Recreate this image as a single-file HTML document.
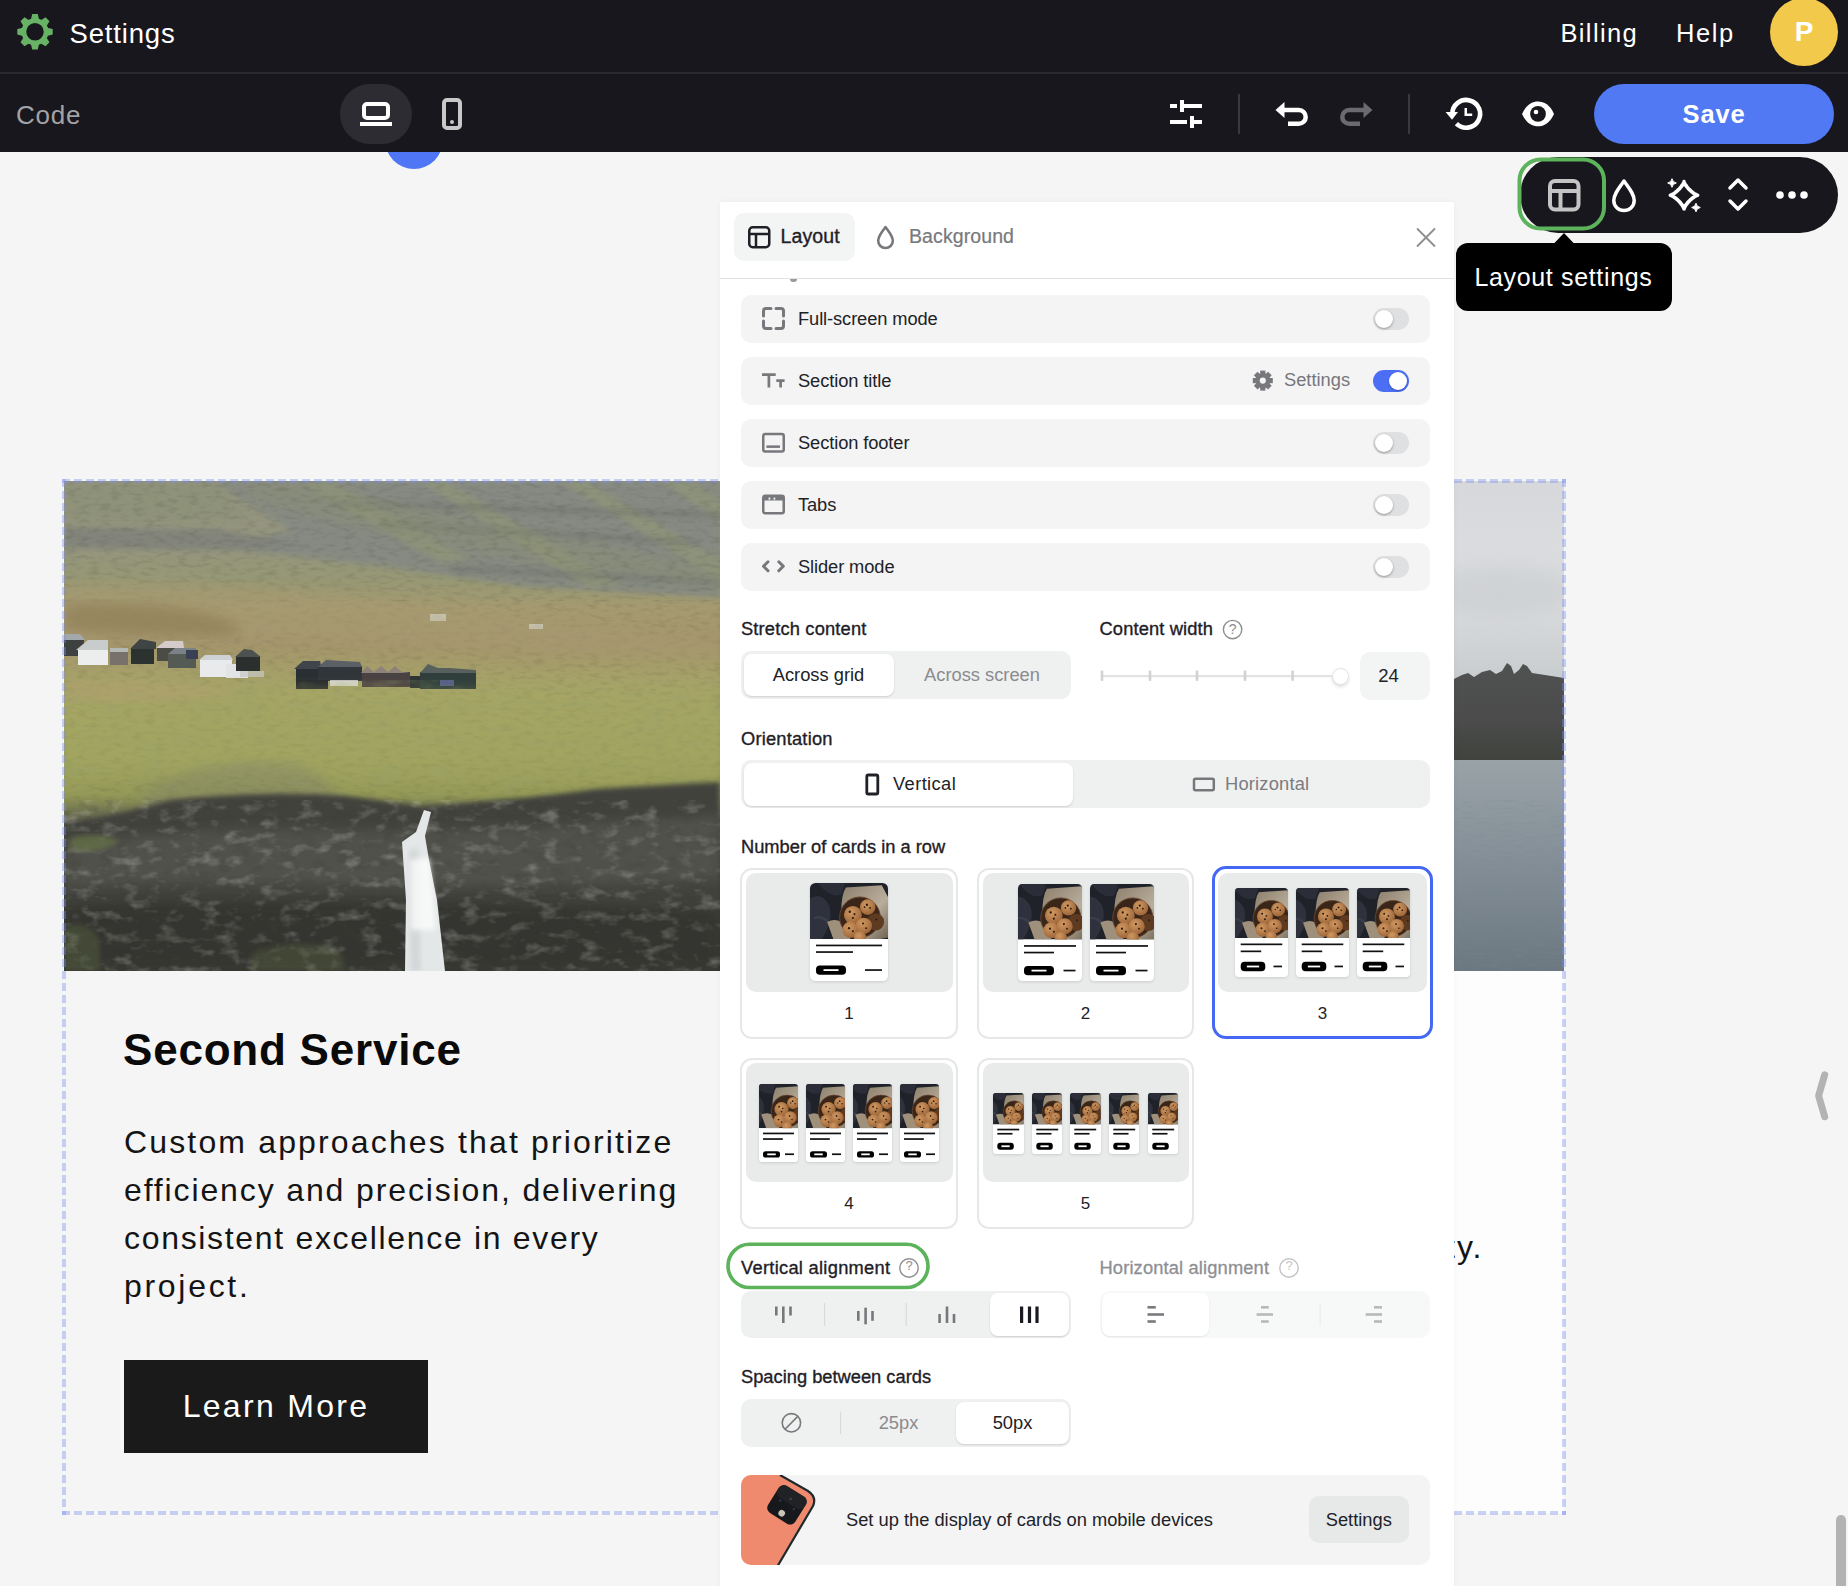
<!DOCTYPE html>
<html><head><meta charset="utf-8">
<style>
*{box-sizing:border-box;margin:0;padding:0}
html,body{width:1848px;height:1586px;overflow:hidden;background:#f5f5f5;font-family:"Liberation Sans",sans-serif;}
.a{position:absolute}
.t{position:absolute;white-space:nowrap;line-height:1}
svg{display:block}
</style></head><body>
<!-- CANVAS CONTENT -->
<div id="canvas">
<!-- left image -->
<svg class="a" style="left:64px;top:481px;filter:saturate(0.92)" width="656" height="490" viewBox="64 481 656 490">
<defs>
<linearGradient id="lg1" x1="0" y1="481" x2="0" y2="971" gradientUnits="userSpaceOnUse">
<stop offset="0" stop-color="#95957f"/>
<stop offset="0.14" stop-color="#94957b"/>
<stop offset="0.2" stop-color="#969872"/>
<stop offset="0.26" stop-color="#a69a6c"/>
<stop offset="0.33" stop-color="#a59568"/>
<stop offset="0.42" stop-color="#a7a463"/>
<stop offset="0.56" stop-color="#a0a55b"/>
<stop offset="0.64" stop-color="#949a52"/>
<stop offset="0.7" stop-color="#56574a"/>
<stop offset="0.8" stop-color="#45453f"/>
<stop offset="1" stop-color="#2e2e2b"/>
</linearGradient>
<filter id="bl2" x="-10%" y="-10%" width="120%" height="120%"><feGaussianBlur stdDeviation="2.5"/></filter>
<filter id="bl5" x="-10%" y="-10%" width="120%" height="120%"><feGaussianBlur stdDeviation="6"/></filter>
<filter id="noise" x="0" y="0" width="100%" height="100%"><feTurbulence type="fractalNoise" baseFrequency="0.09 0.25" numOctaves="2" seed="3"/><feColorMatrix values="0 0 0 0 0  0 0 0 0 0  0 0 0 0 0  0 0 0 1.6 -0.75"/></filter>
<filter id="noise2" x="0" y="0" width="100%" height="100%"><feTurbulence type="fractalNoise" baseFrequency="0.05 0.09" numOctaves="3" seed="7"/><feColorMatrix values="0 0 0 0 0.85  0 0 0 0 0.85  0 0 0 0 0.8  0 0 0 2.6 -1.35"/></filter>
<filter id="noise5" x="0" y="0" width="100%" height="100%"><feTurbulence type="fractalNoise" baseFrequency="0.03 0.08" numOctaves="3" seed="21"/><feColorMatrix values="0 0 0 0 0.3  0 0 0 0 0.35  0 0 0 0 0.15  0 0 0 2.2 -1.1"/></filter>
<filter id="noise4" x="0" y="0" width="100%" height="100%"><feTurbulence type="fractalNoise" baseFrequency="0.06 0.1" numOctaves="3" seed="11"/><feColorMatrix values="0 0 0 0 0.05  0 0 0 0 0.05  0 0 0 0 0.04  0 0 0 2.4 -1.2"/></filter>
</defs>
<rect x="64" y="481" width="656" height="490" fill="url(#lg1)"/>
<!-- gray cliff region upper right -->
<path d="M210 481 L720 481 L720 598 L620 592 L525 587 L380 566 L224 548 L290 530 Z" fill="#858982" opacity="0.85" filter="url(#bl2)"/>
<g fill="#939a72" opacity="0.55" filter="url(#bl2)">
<path d="M300 481 L330 481 L470 560 L440 562 Z"/>
<path d="M420 481 L445 481 L620 585 L590 588 Z"/>
<path d="M560 481 L585 481 L720 560 L720 580 Z"/>
<path d="M660 481 L690 481 L720 500 L720 520 Z"/>
</g>
<g fill="#6f736d" opacity="0.5" filter="url(#bl2)">
<path d="M380 520 L700 540 L700 546 L380 528 Z"/>
<path d="M330 500 L720 512 L720 518 L330 507 Z"/>
<path d="M450 565 L720 578 L720 585 L450 572 Z"/>
</g>
<path d="M64 527 L224 530 L300 545 L224 550 L64 548 Z" fill="#7f8179" opacity="0.8" filter="url(#bl2)"/>
<path d="M250 500 Q330 520 420 540 Q520 560 640 575 L720 585 L720 570 Q600 545 470 520 Q380 500 300 481 L240 481 Z" fill="#8a8f72" opacity="0.45" filter="url(#bl5)"/>
<path d="M64 481 L220 481 L250 520 L64 522 Z" fill="#8c9174" opacity="0.75" filter="url(#bl5)"/>
<rect x="64" y="481" width="656" height="120" filter="url(#noise)" opacity="0.14"/>
<rect x="430" y="614" width="16" height="7" fill="#e6e6e2"/><rect x="529" y="624" width="14" height="5" fill="#e6e6e2"/>
<rect x="64" y="600" width="656" height="200" filter="url(#noise)" opacity="0.12"/>
<!-- tan meadow -->
<path d="M64 585 Q200 580 330 595 T720 640 L720 660 Q500 650 300 640 T64 645 Z" fill="#a89a6e" opacity="0.55" filter="url(#bl5)"/>
<path d="M64 605 Q120 598 190 610 Q260 625 230 636 Q130 636 64 630 Z" fill="#917f55" opacity="0.7" filter="url(#bl5)"/>
<!-- houses -->
<g>
<rect x="64" y="640" width="20" height="16" fill="#3d4240"/><polygon points="64,640 85,640 80,634 64,634" fill="#a3a8aa"/>
<rect x="78" y="649" width="30" height="16" fill="#eceeee"/><polygon points="76,650 88,640 108,640 108,650" fill="#c9cccd"/>
<rect x="110" y="652" width="18" height="13" fill="#77706a"/><rect x="110" y="648" width="18" height="4" fill="#b5b9b5"/>
<rect x="131" y="648" width="23" height="16" fill="#2c322f"/><polygon points="130,649 140,639 156,642 156,649" fill="#3f4544"/>
<rect x="157" y="648" width="26" height="13" fill="#4a4c44"/><polygon points="156,648 165,641 183,641 184,648" fill="#d6cbcb"/>
<rect x="168" y="654" width="28" height="14" fill="#555a55"/><polygon points="168,654 175,648 196,648 196,654" fill="#7b8288"/>
<rect x="186" y="650" width="12" height="9" fill="#394055"/>
<rect x="200" y="659" width="32" height="18" fill="#e8eaeb"/><polygon points="199,660 205,655 230,655 233,660" fill="#cfd2d4"/>
<rect x="226" y="664" width="22" height="14" fill="#e2e4e5"/>
<rect x="236" y="656" width="24" height="15" fill="#2b302f"/><polygon points="235,657 244,649 252,650 261,657" fill="#4c5250"/>
<rect x="240" y="671" width="24" height="6" fill="#c8c9c8" opacity="0.7"/>
<rect x="296" y="668" width="24" height="12" fill="#2a2f33"/><polygon points="294,669 303,661 320,661 322,669" fill="#3f454a"/>
<rect x="318" y="666" width="44" height="15" fill="#30353a"/><polygon points="318,667 326,660 360,662 362,667" fill="#5a6066"/>
<rect x="296" y="680" width="32" height="9" fill="#262a2e"/><rect x="330" y="680" width="28" height="6" fill="#e3e4e4" opacity="0.8"/>
<rect x="362" y="672" width="48" height="15" fill="#4a4242"/><polygon points="361,673 367,666 374,672 381,666 388,672 395,666 402,672 410,673" fill="#8f8178"/>
<rect x="410" y="676" width="16" height="12" fill="#2e3434"/>
<rect x="420" y="672" width="56" height="17" fill="#2f3f3c"/><polygon points="420,673 428,664 438,668 450,668 476,670 476,673" fill="#56605c"/>
<rect x="440" y="680" width="14" height="6" fill="#55608a"/>
</g>
<!-- green field -->
<path d="M64 690 Q300 680 720 700 L720 780 Q500 790 300 780 T64 790 Z" fill="#a4a75c" opacity="0.35" filter="url(#bl5)"/>
<path d="M64 683 Q140 678 250 690 Q200 705 64 700 Z" fill="#b39e6c" opacity="0.6" filter="url(#bl5)"/>
<rect x="64" y="680" width="656" height="130" filter="url(#noise5)" opacity="0.35"/>
<!-- rocky gray patch -->
<path d="M140 790 Q220 752 300 765 Q345 785 340 815 L160 828 Z" fill="#7b7b6b" opacity="0.35" filter="url(#bl5)"/>
<!-- cliff -->
<path d="M64 824 Q120 815 170 800 Q260 790 348 796 Q390 802 420 806 Q520 800 596 789 Q660 785 720 782 L720 971 L64 971 Z" fill="#42423c" filter="url(#bl2)"/>
<path d="M64 845 Q200 825 330 830 Q450 835 720 815 L720 880 Q500 890 300 885 T64 890 Z" fill="#5e5e58" opacity="0.55" filter="url(#bl5)"/>
<path d="M64 905 Q300 895 720 910 L720 971 L64 971 Z" fill="#2a2a27" opacity="0.55" filter="url(#bl5)"/>
<rect x="64" y="800" width="656" height="171" filter="url(#noise2)" opacity="0.28"/>
<rect x="64" y="800" width="656" height="171" filter="url(#noise4)" opacity="0.35"/>
<path d="M64 930 Q85 915 100 940 L100 971 L64 971 Z" fill="#5f7040" opacity="0.35" filter="url(#bl2)"/>
<path d="M250 955 Q290 935 340 950 L345 971 L250 971 Z" fill="#5f7040" opacity="0.3" filter="url(#bl2)"/>
<path d="M70 838 Q100 830 120 842 Q95 855 70 850 Z" fill="#6c7a45" opacity="0.6" filter="url(#bl2)"/>
<!-- waterfall -->
<path d="M424 810 L431 812 L425 836 L429 860 L437 900 L445 971 L405 971 L406 900 L402 842 L416 832 Z" fill="#e4e7e8"/>
<path d="M409 850 L418 848 L421 971 L410 971 Z" fill="#c9cdcf" opacity="0.6" filter="url(#bl2)"/>
<path d="M410 860 L430 858 L436 930 L411 930 Z" fill="#ffffff" opacity="0.7" filter="url(#bl2)"/>
</svg>
<svg class="a" style="left:1454px;top:481px" width="110" height="490" viewBox="1454 481 110 490">
<defs>
<linearGradient id="sky" x1="0" y1="481" x2="0" y2="680" gradientUnits="userSpaceOnUse"><stop offset="0" stop-color="#d6d8db"/><stop offset="0.55" stop-color="#dcdee0"/><stop offset="1" stop-color="#c9ccce"/></linearGradient>
<linearGradient id="sea" x1="0" y1="760" x2="0" y2="971" gradientUnits="userSpaceOnUse"><stop offset="0" stop-color="#99a2a7"/><stop offset="0.4" stop-color="#87929a"/><stop offset="1" stop-color="#6c7880"/></linearGradient>
<linearGradient id="cliff" x1="0" y1="665" x2="0" y2="762" gradientUnits="userSpaceOnUse"><stop offset="0" stop-color="#505151"/><stop offset="0.6" stop-color="#4a4b4a"/><stop offset="1" stop-color="#3f423d"/></linearGradient>
<filter id="blr" x="-50%" y="-50%" width="200%" height="200%"><feGaussianBlur stdDeviation="10"/></filter>
<filter id="noise3" x="0" y="0" width="100%" height="100%"><feTurbulence type="fractalNoise" baseFrequency="0.08 0.4" numOctaves="2" seed="5"/><feColorMatrix values="0 0 0 0 0.2  0 0 0 0 0.25  0 0 0 0 0.28  0 0 0 1.5 -0.7"/></filter>
</defs>
<rect x="1454" y="481" width="110" height="490" fill="url(#sky)"/>
<ellipse cx="1500" cy="590" rx="80" ry="25" fill="#c4c7ca" opacity="0.5" filter="url(#blr)"/>
<path d="M1454 679 L1462 675 L1468 673 L1474 677 L1482 672 L1490 670 L1496 674 L1502 671 L1507 663 L1511 666 L1514 674 L1519 670 L1523 664 L1527 666 L1532 673 L1545 675 L1564 678 L1564 762 L1454 762 Z" fill="url(#cliff)"/>
<rect x="1454" y="760" width="110" height="211" fill="url(#sea)"/>
<rect x="1454" y="800" width="110" height="171" filter="url(#noise3)" opacity="0.5"/>
</svg>

<!-- right image -->
<div class="a" style="left:1454px;top:971px;width:110px;height:542px;background:#fdfdfd"></div>
<div class="t" style="left:1446px;top:1231.4px;font-size:32px;letter-spacing:2px;color:#141414">ty.</div>
<!-- dashed border -->
<div class="a" style="left:62px;top:479px;width:1504px;height:4px;background:repeating-linear-gradient(90deg,rgba(120,140,240,.38) 0 8px,transparent 8px 12px)"></div>
<div class="a" style="left:62px;top:1511px;width:1504px;height:4px;background:repeating-linear-gradient(90deg,rgba(120,140,240,.38) 0 8px,transparent 8px 12px)"></div>
<div class="a" style="left:62px;top:479px;width:4px;height:1036px;background:repeating-linear-gradient(180deg,rgba(120,140,240,.38) 0 8px,transparent 8px 12px)"></div>
<div class="a" style="left:1562px;top:479px;width:4px;height:1036px;background:repeating-linear-gradient(180deg,rgba(120,140,240,.38) 0 8px,transparent 8px 12px)"></div>
<!-- text -->
<div class="t" style="left:123px;top:1028px;font-size:44px;font-weight:bold;color:#0a0a0a;letter-spacing:0.78px">Second Service</div>
<div class="a" style="left:124px;top:1118px;font-size:32px;line-height:48px;color:#141414;white-space:nowrap"><div style="letter-spacing:2.15px">Custom approaches that prioritize</div><div style="letter-spacing:1.87px">efficiency and precision, delivering</div><div style="letter-spacing:1.68px">consistent excellence in every</div><div style="letter-spacing:2.7px">project.</div></div>
<div class="a" style="left:124px;top:1360px;width:304px;height:93px;background:#1a1a1a"></div>
<div class="t" style="left:124px;width:304px;text-align:center;top:1390px;font-size:32px;letter-spacing:2.3px;color:#fff">Learn More</div>
<div class="a" style="left:385px;top:111px;width:58px;height:58px;border-radius:50%;background:#4e76f5"></div>
<!-- right chevron + scrollbar -->
<svg class="a" style="left:1810px;top:1068px" width="24" height="56" viewBox="0 0 24 56"><path d="M14.7 6.8 L8.6 27.7 L14.7 48.7" fill="none" stroke="#b3b3b3" stroke-width="7" stroke-linecap="round" stroke-linejoin="bevel"/></svg>
<div class="a" style="left:1836px;top:1515px;width:10px;height:80px;border-radius:5px;background:#b3b3b3"></div>
</div>

<!-- TOP BAR -->
<div class="a" style="left:0;top:0;width:1848px;height:152px;background:#18171d"></div>
<div class="a" style="left:0;top:72px;width:1848px;height:2px;background:#2a292f"></div>
<svg class="a" style="left:0;top:0" width="1848" height="152" viewBox="0 0 1848 152">
<g fill="#68b266"><path d="M30.9 19.8 L32.2 14.100000000000001 L37.8 14.100000000000001 L39.1 19.8 Z" transform="rotate(0 35 31.8)"/><path d="M30.9 19.8 L32.2 14.100000000000001 L37.8 14.100000000000001 L39.1 19.8 Z" transform="rotate(45 35 31.8)"/><path d="M30.9 19.8 L32.2 14.100000000000001 L37.8 14.100000000000001 L39.1 19.8 Z" transform="rotate(90 35 31.8)"/><path d="M30.9 19.8 L32.2 14.100000000000001 L37.8 14.100000000000001 L39.1 19.8 Z" transform="rotate(135 35 31.8)"/><path d="M30.9 19.8 L32.2 14.100000000000001 L37.8 14.100000000000001 L39.1 19.8 Z" transform="rotate(180 35 31.8)"/><path d="M30.9 19.8 L32.2 14.100000000000001 L37.8 14.100000000000001 L39.1 19.8 Z" transform="rotate(225 35 31.8)"/><path d="M30.9 19.8 L32.2 14.100000000000001 L37.8 14.100000000000001 L39.1 19.8 Z" transform="rotate(270 35 31.8)"/><path d="M30.9 19.8 L32.2 14.100000000000001 L37.8 14.100000000000001 L39.1 19.8 Z" transform="rotate(315 35 31.8)"/></g>
<circle cx="35" cy="31.8" r="11.1" fill="none" stroke="#68b266" stroke-width="4.7"/>
<!-- laptop pill -->
<rect x="340" y="84" width="72" height="60" rx="30" fill="#2d2c32"/>
<rect x="364" y="104" width="24" height="14" rx="3" fill="none" stroke="#fff" stroke-width="4"/>
<rect x="360" y="122" width="32" height="4" fill="#fff"/>
<!-- phone -->
<rect x="444" y="100" width="16" height="28" rx="3" fill="none" stroke="#c8c8c8" stroke-width="4"/>
<circle cx="452" cy="122" r="2" fill="#c8c8c8"/>
<!-- sliders -->
<g fill="#fff">
<rect x="1170" y="104" width="7" height="4"/><rect x="1184" y="104" width="18" height="4"/><rect x="1180" y="100" width="4" height="12"/>
<rect x="1170" y="120" width="17" height="4"/><rect x="1194" y="120" width="8" height="4"/><rect x="1190" y="116" width="4" height="12"/>
</g>
<rect x="1238" y="94" width="2" height="40" fill="#3a3940"/>
<rect x="1408" y="94" width="2" height="40" fill="#3a3940"/>
<!-- undo -->
<g id="undo"><path d="M1283 110 H1298.8 A6.9 6.9 0 0 1 1298.8 123.8 H1288" fill="none" stroke="#fff" stroke-width="4.5"/>
<polygon points="1275.5,110 1284.5,102 1284.5,118" fill="#fff"/></g>
<g transform="translate(2648 0) scale(-1 1)"><path d="M1283 110 H1298.8 A6.9 6.9 0 0 1 1298.8 123.8 H1288" fill="none" stroke="#6b6a70" stroke-width="4.5"/>
<polygon points="1275.5,110 1284.5,102 1284.5,118" fill="#6b6a70"/></g>
<!-- history -->
<path d="M1452.3 113.9 A13.9 13.9 0 1 1 1456.4 123.7" fill="none" stroke="#fff" stroke-width="4.6"/>
<polygon points="1445.6,112 1458,112 1452,119.8" fill="#fff"/>
<path d="M1465.75 108 V114.75 H1472.2" fill="none" stroke="#fff" stroke-width="2.5"/>
<!-- eye -->
<path d="M1522 113.9 C1526 105 1532 101.6 1538 101.6 C1544 101.6 1550 105 1554 113.9 C1550 122.8 1544 126.2 1538 126.2 C1532 126.2 1526 122.8 1522 113.9 Z" fill="#fff"/>
<circle cx="1538" cy="113.9" r="7.9" fill="#18171d"/>
<circle cx="1536" cy="112" r="2.3" fill="#fff"/>
<!-- save -->
<rect x="1594" y="84" width="240" height="60" rx="30" fill="#5079f3"/>
<!-- avatar -->
<circle cx="1804" cy="32" r="34" fill="#f2c94a"/>
</svg>
<div class="t" style="left:69.5px;top:19.5px;font-size:27.5px;color:#fff;letter-spacing:0.83px">Settings</div>
<div class="t" style="left:16px;top:102px;font-size:26px;color:#a3a3a6;letter-spacing:0.8px">Code</div>
<div class="t" style="left:1560.5px;top:20.5px;font-size:25.5px;color:#fff;letter-spacing:1.35px">Billing</div>
<div class="t" style="left:1676px;top:20.5px;font-size:25.5px;color:#fff;letter-spacing:1.6px">Help</div>
<div class="t" style="left:1770px;width:68px;text-align:center;top:18px;font-size:28px;font-weight:bold;color:#fff">P</div>
<div class="t" style="left:1594px;width:240px;text-align:center;top:102.4px;font-size:25.5px;font-weight:bold;color:#fff;letter-spacing:0.8px">Save</div>


<!-- FLOATING TOOLBAR -->
<svg class="a" style="left:1440px;top:150px" width="408" height="170" viewBox="1440 150 408 170">
<rect x="1520" y="157" width="318" height="76" rx="38" fill="#18171d"/>
<rect x="1519.5" y="159.5" width="84.5" height="69" rx="21" fill="none" stroke="#5cb35b" stroke-width="4"/>
<!-- layout icon -->
<rect x="1550" y="181" width="28.5" height="28.5" rx="5" fill="none" stroke="#c4c4c4" stroke-width="4"/>
<rect x="1550" y="189" width="28.5" height="4" fill="#c4c4c4"/>
<rect x="1558.5" y="191" width="4" height="18" fill="#c4c4c4"/>
<!-- drop -->
<path d="M1624 181 C1619 188 1613.8 194 1613.8 200.5 C1613.8 206.5 1618.5 210.5 1624 210.5 C1629.5 210.5 1634.2 206.5 1634.2 200.5 C1634.2 194 1629 188 1624 181 Z" fill="none" stroke="#fff" stroke-width="3.5" stroke-linejoin="round"/>
<!-- sparkle -->
<path d="M1697.60,195.20 L1697.55,195.21 L1697.41,195.24 L1697.17,195.31 L1696.84,195.43 L1696.43,195.60 L1695.94,195.84 L1695.37,196.14 L1694.75,196.51 L1694.07,196.95 L1693.36,197.44 L1692.61,198.00 L1691.84,198.62 L1691.06,199.28 L1690.29,199.98 L1689.52,200.72 L1688.78,201.49 L1688.08,202.26 L1687.42,203.04 L1686.80,203.81 L1686.24,204.56 L1685.75,205.27 L1685.31,205.95 L1684.94,206.57 L1684.64,207.14 L1684.40,207.63 L1684.23,208.04 L1684.11,208.37 L1684.04,208.61 L1684.01,208.75 L1684.00,208.80 L1683.99,208.75 L1683.96,208.61 L1683.89,208.37 L1683.77,208.04 L1683.60,207.63 L1683.36,207.14 L1683.06,206.57 L1682.69,205.95 L1682.25,205.27 L1681.76,204.56 L1681.20,203.81 L1680.58,203.04 L1679.92,202.26 L1679.22,201.49 L1678.48,200.72 L1677.71,199.98 L1676.94,199.28 L1676.16,198.62 L1675.39,198.00 L1674.64,197.44 L1673.93,196.95 L1673.25,196.51 L1672.63,196.14 L1672.06,195.84 L1671.57,195.60 L1671.16,195.43 L1670.83,195.31 L1670.59,195.24 L1670.45,195.21 L1670.40,195.20 L1670.45,195.19 L1670.59,195.16 L1670.83,195.09 L1671.16,194.97 L1671.57,194.80 L1672.06,194.56 L1672.63,194.26 L1673.25,193.89 L1673.93,193.45 L1674.64,192.96 L1675.39,192.40 L1676.16,191.78 L1676.94,191.12 L1677.71,190.42 L1678.48,189.68 L1679.22,188.91 L1679.92,188.14 L1680.58,187.36 L1681.20,186.59 L1681.76,185.84 L1682.25,185.13 L1682.69,184.45 L1683.06,183.83 L1683.36,183.26 L1683.60,182.77 L1683.77,182.36 L1683.89,182.03 L1683.96,181.79 L1683.99,181.65 L1684.00,181.60 L1684.01,181.65 L1684.04,181.79 L1684.11,182.03 L1684.23,182.36 L1684.40,182.77 L1684.64,183.26 L1684.94,183.83 L1685.31,184.45 L1685.75,185.13 L1686.24,185.84 L1686.80,186.59 L1687.42,187.36 L1688.08,188.14 L1688.78,188.91 L1689.52,189.68 L1690.29,190.42 L1691.06,191.12 L1691.84,191.78 L1692.61,192.40 L1693.36,192.96 L1694.07,193.45 L1694.75,193.89 L1695.37,194.26 L1695.94,194.56 L1696.43,194.80 L1696.84,194.97 L1697.17,195.09 L1697.41,195.16 L1697.55,195.19 Z" fill="none" stroke="#fff" stroke-width="3.7" stroke-linejoin="round"/>
<path d="M1672 178.7 Q1672.6 182.4 1676.3 183 Q1672.6 183.6 1672 187.3 Q1671.4 183.6 1667.7 183 Q1671.4 182.4 1672 178.7 Z" fill="#fff" stroke="#fff" stroke-width="1" stroke-linejoin="round"/>
<path d="M1696 203.2 Q1696.6 206.9 1700.3 207.5 Q1696.6 208.1 1696 211.8 Q1695.4 208.1 1691.7 207.5 Q1695.4 206.9 1696 203.2 Z" fill="#fff" stroke="#fff" stroke-width="1" stroke-linejoin="round"/>
<!-- chevrons -->
<path d="M1730 188 L1738 180 L1746 188 M1730 201 L1738 209 L1746 201" fill="none" stroke="#fff" stroke-width="3.5" stroke-linecap="round" stroke-linejoin="round"/>
<!-- dots -->
<circle cx="1780" cy="195" r="3.8" fill="#fff"/><circle cx="1792" cy="195" r="3.8" fill="#fff"/><circle cx="1804" cy="195" r="3.8" fill="#fff"/>
<!-- tooltip -->
<polygon points="1564,233 1573.5,243 1554.5,243" fill="#000"/>
<rect x="1456" y="243" width="216" height="68" rx="12" fill="#000"/>
</svg>
<div class="t" style="left:1474.5px;top:264.5px;font-size:25px;color:#fff;letter-spacing:0.65px">Layout settings</div>


<!-- PANEL -->
<svg width="0" height="0" style="position:absolute">
<defs>
<radialGradient id="ck" cx="40%" cy="35%" r="70%"><stop offset="0" stop-color="#d19a62"/><stop offset="1" stop-color="#9a6236"/></radialGradient>
<linearGradient id="pp" x1="0" y1="0" x2="1" y2="1"><stop offset="0" stop-color="#8c7f6c"/><stop offset="0.6" stop-color="#b9ad9b"/><stop offset="1" stop-color="#6e6252"/></linearGradient>
<symbol id="cookie" viewBox="0 0 100 72" preserveAspectRatio="xMidYMid slice">
<rect width="100" height="72" fill="#20222a"/>
<path d="M0 20 Q15 10 25 30 Q30 50 15 72 L0 72 Z" fill="#2f323c"/>
<path d="M10 0 Q25 20 40 15 L45 0 Z" fill="#2b2e38"/>
<path d="M5 45 Q20 40 30 60" fill="none" stroke="#3a3e4a" stroke-width="3"/>
<path d="M46 6 L92 3 L100 18 L100 70 L90 72 L60 72 Q40 60 40 40 Q40 15 46 6 Z" fill="url(#pp)"/>
<path d="M22 50 Q32 45 40 50 L52 72 L30 72 Z" fill="#9e907a"/>
<circle cx="64" cy="44" r="26" fill="#3a2618"/>
<circle cx="64" cy="44" r="26" fill="none" stroke="#6a4630" stroke-width="1.2"/>
<circle cx="55" cy="41" r="11.5" fill="url(#ck)"/>
<circle cx="74" cy="31" r="10" fill="url(#ck)"/>
<circle cx="84" cy="50" r="11" fill="#5e3a20"/>
<circle cx="52" cy="60" r="10.5" fill="url(#ck)"/>
<circle cx="69" cy="55" r="10.5" fill="url(#ck)"/>
<circle cx="64" cy="70" r="8" fill="url(#ck)"/>
<g fill="#2e1c12"><circle cx="51" cy="37" r="1.5"/><circle cx="57" cy="40" r="1.3"/><circle cx="55" cy="45" r="1.4"/><circle cx="73" cy="28" r="1.5"/><circle cx="77" cy="32" r="1.2"/><circle cx="70" cy="31" r="1.1"/><circle cx="50" cy="58" r="1.5"/><circle cx="55" cy="62" r="1.3"/><circle cx="68" cy="52" r="1.4"/><circle cx="72" cy="58" r="1.2"/><circle cx="85" cy="47" r="1.3"/></g>
</symbol>
</defs></svg>
<div class="a" style="left:720px;top:202px;width:734px;height:1400px;background:#fff;box-shadow:0 0 6px rgba(0,0,0,.04)"></div>
<div class="a" style="left:734px;top:213px;width:121px;height:48px;border-radius:10px;background:#f3f4f4"></div>
<div class="a" style="left:720px;top:278px;width:734px;height:1px;background:#e3e3e3"></div>
<div class="a" style="left:790px;top:279px;width:7px;height:3px;border-radius:0 0 4px 4px;background:#9a9a9a"></div>
<div class="t" style="left:780.5px;top:226.99px;font-size:19.5px;color:#1f2026;-webkit-text-stroke:0.35px #1f2026;letter-spacing:0.1px;">Layout</div>
<div class="t" style="left:909px;top:226.99px;font-size:19.5px;color:#77787c;letter-spacing:0.1px;-webkit-text-stroke:0.2px #77787c;">Background</div>
<div class="a" style="left:741px;top:295px;width:689px;height:48px;border-radius:10px;background:#f4f4f4"></div>
<div class="t" style="left:798px;top:309.51px;font-size:18.3px;color:#202228;letter-spacing:-0.1px;">Full-screen mode</div>
<div class="a" style="left:1373px;top:308px;width:36px;height:22px;border-radius:11px;background:#dfe0e2"></div>
<div class="a" style="left:1375px;top:310px;width:18px;height:18px;border-radius:50%;background:#fff;box-shadow:0 1px 2.5px rgba(0,0,0,.35)"></div>
<div class="a" style="left:741px;top:357px;width:689px;height:48px;border-radius:10px;background:#f4f4f4"></div>
<div class="t" style="left:798px;top:371.51px;font-size:18.3px;color:#202228;letter-spacing:-0.1px;">Section title</div>
<div class="a" style="left:1373px;top:370px;width:36px;height:22px;border-radius:11px;background:#4b6ef5"></div>
<div class="a" style="left:1389px;top:372px;width:18px;height:18px;border-radius:50%;background:#fff;box-shadow:0 1px 2px rgba(0,0,0,.25)"></div>
<div class="a" style="left:741px;top:419px;width:689px;height:48px;border-radius:10px;background:#f4f4f4"></div>
<div class="t" style="left:798px;top:433.51px;font-size:18.3px;color:#202228;letter-spacing:-0.1px;">Section footer</div>
<div class="a" style="left:1373px;top:432px;width:36px;height:22px;border-radius:11px;background:#dfe0e2"></div>
<div class="a" style="left:1375px;top:434px;width:18px;height:18px;border-radius:50%;background:#fff;box-shadow:0 1px 2.5px rgba(0,0,0,.35)"></div>
<div class="a" style="left:741px;top:481px;width:689px;height:48px;border-radius:10px;background:#f4f4f4"></div>
<div class="t" style="left:798px;top:495.51px;font-size:18.3px;color:#202228;letter-spacing:-0.1px;">Tabs</div>
<div class="a" style="left:1373px;top:494px;width:36px;height:22px;border-radius:11px;background:#dfe0e2"></div>
<div class="a" style="left:1375px;top:496px;width:18px;height:18px;border-radius:50%;background:#fff;box-shadow:0 1px 2.5px rgba(0,0,0,.35)"></div>
<div class="a" style="left:741px;top:543px;width:689px;height:48px;border-radius:10px;background:#f4f4f4"></div>
<div class="t" style="left:798px;top:557.51px;font-size:18.3px;color:#202228;letter-spacing:-0.1px;">Slider mode</div>
<div class="a" style="left:1373px;top:556px;width:36px;height:22px;border-radius:11px;background:#dfe0e2"></div>
<div class="a" style="left:1375px;top:558px;width:18px;height:18px;border-radius:50%;background:#fff;box-shadow:0 1px 2.5px rgba(0,0,0,.35)"></div>
<div class="t" style="left:1284px;top:371.11px;font-size:18.3px;color:#76777b;letter-spacing:0px;">Settings</div>
<div class="t" style="left:741px;top:620.01px;font-size:18.3px;color:#1f2026;-webkit-text-stroke:0.35px #1f2026;letter-spacing:0.17px;">Stretch content</div>
<div class="a" style="left:741px;top:651px;width:330px;height:48px;border-radius:10px;background:#eff0f0"></div>
<div class="a" style="left:743.5px;top:653.5px;width:150px;height:42.5px;border-radius:8px;background:#fff;box-shadow:0 1px 2px rgba(0,0,0,.14)"></div>
<div class="t" style="left:743.5px;top:665.71px;font-size:18.3px;color:#202228;width:150px;text-align:center;">Across grid</div>
<div class="t" style="left:893.5px;top:665.71px;font-size:18.3px;color:#8a8b8f;width:177px;text-align:center;">Across screen</div>
<div class="t" style="left:1099.5px;top:620.01px;font-size:18.3px;color:#1f2026;-webkit-text-stroke:0.35px #1f2026;letter-spacing:0.13px;">Content width</div>
<div class="t" style="left:1222.6px;width:20px;text-align:center;top:621.5px;font-size:14px;color:#8d8d90">?</div>
<div class="a" style="left:1333px;top:669px;width:15px;height:15px;border-radius:50%;background:#fff;box-shadow:0 0 0 1px #e6e6e6,0 2px 4px rgba(0,0,0,.2)"></div>
<div class="a" style="left:1360px;top:652px;width:70px;height:48px;border-radius:10px;background:#f3f4f4"></div>
<div class="t" style="left:1360px;top:666.84px;font-size:18.5px;color:#202228;width:57px;text-align:center;">24</div>
<div class="t" style="left:741px;top:729.81px;font-size:18.3px;color:#1f2026;-webkit-text-stroke:0.35px #1f2026;letter-spacing:0.2px;">Orientation</div>
<div class="a" style="left:741px;top:760px;width:689px;height:48px;border-radius:10px;background:#eff0f0"></div>
<div class="a" style="left:743.5px;top:762.5px;width:329px;height:43px;border-radius:8px;background:#fff;box-shadow:0 1px 2px rgba(0,0,0,.14)"></div>
<div class="t" style="left:893px;top:775.01px;font-size:18.3px;color:#202228;letter-spacing:0.4px;">Vertical</div>
<div class="t" style="left:1225px;top:775.01px;font-size:18.3px;color:#7a7b7f;letter-spacing:0.2px;">Horizontal</div>
<div class="t" style="left:741px;top:838.11px;font-size:18.3px;color:#1f2026;-webkit-text-stroke:0.35px #1f2026;">Number of cards in a row</div>
<div class="a" style="left:740px;top:867.5px;width:218px;height:171px;border-radius:12px;border:2px solid #e7e7e7;background:#fff"></div>
<div class="a" style="left:745.5px;top:872.5px;width:207px;height:119px;border-radius:10px;background:#e9eaea"></div>
<div class="t" style="left:740px;top:1004.71px;font-size:17px;color:#202228;width:218px;text-align:center;">1</div>
<div class="a" style="left:977px;top:867.5px;width:217px;height:171px;border-radius:12px;border:2px solid #e7e7e7;background:#fff"></div>
<div class="a" style="left:982.5px;top:872.5px;width:206px;height:119px;border-radius:10px;background:#e9eaea"></div>
<div class="t" style="left:977px;top:1004.71px;font-size:17px;color:#202228;width:217px;text-align:center;">2</div>
<div class="a" style="left:1212px;top:865.5px;width:221px;height:173px;border-radius:14px;border:3px solid #4468f3;background:#fff"></div>
<div class="a" style="left:1218px;top:872.5px;width:209px;height:119px;border-radius:10px;background:#e9eaea"></div>
<div class="t" style="left:1212px;top:1004.51px;font-size:17px;color:#202228;width:221px;text-align:center;">3</div>
<div class="a" style="left:740px;top:1058px;width:218px;height:171px;border-radius:12px;border:2px solid #e7e7e7;background:#fff"></div>
<div class="a" style="left:745.5px;top:1063px;width:207px;height:119px;border-radius:10px;background:#e9eaea"></div>
<div class="t" style="left:740px;top:1195.21px;font-size:17px;color:#202228;width:218px;text-align:center;">4</div>
<div class="a" style="left:977px;top:1058px;width:217px;height:171px;border-radius:12px;border:2px solid #e7e7e7;background:#fff"></div>
<div class="a" style="left:982.5px;top:1063px;width:206px;height:119px;border-radius:10px;background:#e9eaea"></div>
<div class="t" style="left:977px;top:1195.21px;font-size:17px;color:#202228;width:217px;text-align:center;">5</div>
<div class="a" style="left:810px;top:883.4px;width:78px;height:97.5px;border-radius:5.5px;overflow:hidden;background:#fff;box-shadow:0 1px 3px rgba(0,0,0,.13)"><svg width="78" height="97.5" viewBox="0 0 78 97.5"><use href="#cookie" x="0" y="0" width="78" height="56"/><rect x="6" y="61.6" width="66" height="1.7" fill="#111"/><rect x="6" y="68.2" width="37" height="1.7" fill="#111"/><rect x="6" y="82.5" width="30" height="9.200000000000003" rx="3.8" fill="#000"/><rect x="13.5" y="86.19999999999999" width="15.0" height="1.8" fill="#fff"/><rect x="55" y="86.2" width="17" height="1.7" fill="#111"/></svg></div>
<div class="a" style="left:1017.6px;top:883.5px;width:64px;height:97px;border-radius:4.5px;overflow:hidden;background:#fff;box-shadow:0 1px 3px rgba(0,0,0,.13)"><svg width="64" height="97" viewBox="0 0 64 97"><use href="#cookie" x="0" y="0" width="64" height="55.5"/><rect x="6" y="61.1" width="52" height="1.7" fill="#111"/><rect x="6" y="67.7" width="30" height="1.7" fill="#111"/><rect x="6" y="82.0" width="30" height="9.200000000000003" rx="3.8" fill="#000"/><rect x="13.5" y="85.69999999999999" width="15.0" height="1.8" fill="#fff"/><rect x="45.5" y="85.7" width="12" height="1.7" fill="#111"/></svg></div>
<div class="a" style="left:1089.5px;top:883.5px;width:64px;height:97px;border-radius:4.5px;overflow:hidden;background:#fff;box-shadow:0 1px 3px rgba(0,0,0,.13)"><svg width="64" height="97" viewBox="0 0 64 97"><use href="#cookie" x="0" y="0" width="64" height="55.5"/><rect x="6" y="61.1" width="52" height="1.7" fill="#111"/><rect x="6" y="67.7" width="30" height="1.7" fill="#111"/><rect x="6" y="82.0" width="30" height="9.200000000000003" rx="3.8" fill="#000"/><rect x="13.5" y="85.69999999999999" width="15.0" height="1.8" fill="#fff"/><rect x="45.5" y="85.7" width="12" height="1.7" fill="#111"/></svg></div>
<div class="a" style="left:1235px;top:888px;width:53px;height:89px;border-radius:3.7px;overflow:hidden;background:#fff;box-shadow:0 1px 3px rgba(0,0,0,.13)"><svg width="53" height="89" viewBox="0 0 53 89"><use href="#cookie" x="0" y="0" width="53" height="50"/><rect x="5.7" y="55.5" width="41.6" height="1.7" fill="#111"/><rect x="5.7" y="62.5" width="20.5" height="1.7" fill="#111"/><rect x="5.7" y="73.7" width="24.6" height="9.599999999999998" rx="4.0" fill="#000"/><rect x="11.850000000000001" y="77.6" width="12.3" height="1.8" fill="#fff"/><rect x="38.5" y="77.60000000000001" width="8.5" height="1.7" fill="#111"/></svg></div>
<div class="a" style="left:1296px;top:888px;width:53px;height:89px;border-radius:3.7px;overflow:hidden;background:#fff;box-shadow:0 1px 3px rgba(0,0,0,.13)"><svg width="53" height="89" viewBox="0 0 53 89"><use href="#cookie" x="0" y="0" width="53" height="50"/><rect x="5.7" y="55.5" width="41.6" height="1.7" fill="#111"/><rect x="5.7" y="62.5" width="20.5" height="1.7" fill="#111"/><rect x="5.7" y="73.7" width="24.6" height="9.599999999999998" rx="4.0" fill="#000"/><rect x="11.850000000000001" y="77.6" width="12.3" height="1.8" fill="#fff"/><rect x="38.5" y="77.60000000000001" width="8.5" height="1.7" fill="#111"/></svg></div>
<div class="a" style="left:1357px;top:888px;width:53px;height:89px;border-radius:3.7px;overflow:hidden;background:#fff;box-shadow:0 1px 3px rgba(0,0,0,.13)"><svg width="53" height="89" viewBox="0 0 53 89"><use href="#cookie" x="0" y="0" width="53" height="50"/><rect x="5.7" y="55.5" width="41.6" height="1.7" fill="#111"/><rect x="5.7" y="62.5" width="20.5" height="1.7" fill="#111"/><rect x="5.7" y="73.7" width="24.6" height="9.599999999999998" rx="4.0" fill="#000"/><rect x="11.850000000000001" y="77.6" width="12.3" height="1.8" fill="#fff"/><rect x="38.5" y="77.60000000000001" width="8.5" height="1.7" fill="#111"/></svg></div>
<div class="a" style="left:759px;top:1083.8px;width:39px;height:78.2px;border-radius:3.0px;overflow:hidden;background:#fff;box-shadow:0 1px 3px rgba(0,0,0,.13)"><svg width="39" height="78.2" viewBox="0 0 39 78.2"><use href="#cookie" x="0" y="0" width="39" height="44.2"/><rect x="4" y="48.60000000000001" width="31" height="1.7" fill="#111"/><rect x="4" y="54.2" width="19.8" height="1.7" fill="#111"/><rect x="4" y="67.2" width="17" height="6.300000000000001" rx="2.6" fill="#000"/><rect x="8.25" y="69.44999999999999" width="8.5" height="1.8" fill="#fff"/><rect x="26" y="69.4" width="9" height="1.7" fill="#111"/></svg></div>
<div class="a" style="left:806px;top:1083.8px;width:39px;height:78.2px;border-radius:3.0px;overflow:hidden;background:#fff;box-shadow:0 1px 3px rgba(0,0,0,.13)"><svg width="39" height="78.2" viewBox="0 0 39 78.2"><use href="#cookie" x="0" y="0" width="39" height="44.2"/><rect x="4" y="48.60000000000001" width="31" height="1.7" fill="#111"/><rect x="4" y="54.2" width="19.8" height="1.7" fill="#111"/><rect x="4" y="67.2" width="17" height="6.300000000000001" rx="2.6" fill="#000"/><rect x="8.25" y="69.44999999999999" width="8.5" height="1.8" fill="#fff"/><rect x="26" y="69.4" width="9" height="1.7" fill="#111"/></svg></div>
<div class="a" style="left:853px;top:1083.8px;width:39px;height:78.2px;border-radius:3.0px;overflow:hidden;background:#fff;box-shadow:0 1px 3px rgba(0,0,0,.13)"><svg width="39" height="78.2" viewBox="0 0 39 78.2"><use href="#cookie" x="0" y="0" width="39" height="44.2"/><rect x="4" y="48.60000000000001" width="31" height="1.7" fill="#111"/><rect x="4" y="54.2" width="19.8" height="1.7" fill="#111"/><rect x="4" y="67.2" width="17" height="6.300000000000001" rx="2.6" fill="#000"/><rect x="8.25" y="69.44999999999999" width="8.5" height="1.8" fill="#fff"/><rect x="26" y="69.4" width="9" height="1.7" fill="#111"/></svg></div>
<div class="a" style="left:900px;top:1083.8px;width:39px;height:78.2px;border-radius:3.0px;overflow:hidden;background:#fff;box-shadow:0 1px 3px rgba(0,0,0,.13)"><svg width="39" height="78.2" viewBox="0 0 39 78.2"><use href="#cookie" x="0" y="0" width="39" height="44.2"/><rect x="4" y="48.60000000000001" width="31" height="1.7" fill="#111"/><rect x="4" y="54.2" width="19.8" height="1.7" fill="#111"/><rect x="4" y="67.2" width="17" height="6.300000000000001" rx="2.6" fill="#000"/><rect x="8.25" y="69.44999999999999" width="8.5" height="1.8" fill="#fff"/><rect x="26" y="69.4" width="9" height="1.7" fill="#111"/></svg></div>
<div class="a" style="left:993px;top:1092.5px;width:30.5px;height:61.3px;border-radius:3.0px;overflow:hidden;background:#fff;box-shadow:0 1px 3px rgba(0,0,0,.13)"><svg width="30.5" height="61.3" viewBox="0 0 30.5 61.3"><use href="#cookie" x="0" y="0" width="30.5" height="31.5"/><rect x="4.3" y="35.7" width="21.9" height="1.7" fill="#111"/><rect x="4.3" y="39.900000000000006" width="15.2" height="1.7" fill="#111"/><rect x="4.3" y="49.8" width="16.5" height="6.899999999999999" rx="2.9" fill="#000"/><rect x="8.425" y="52.35" width="8.25" height="1.8" fill="#fff"/></svg></div>
<div class="a" style="left:1031.6px;top:1092.5px;width:30.5px;height:61.3px;border-radius:3.0px;overflow:hidden;background:#fff;box-shadow:0 1px 3px rgba(0,0,0,.13)"><svg width="30.5" height="61.3" viewBox="0 0 30.5 61.3"><use href="#cookie" x="0" y="0" width="30.5" height="31.5"/><rect x="4.3" y="35.7" width="21.9" height="1.7" fill="#111"/><rect x="4.3" y="39.900000000000006" width="15.2" height="1.7" fill="#111"/><rect x="4.3" y="49.8" width="16.5" height="6.899999999999999" rx="2.9" fill="#000"/><rect x="8.425" y="52.35" width="8.25" height="1.8" fill="#fff"/></svg></div>
<div class="a" style="left:1070.4px;top:1092.5px;width:30.5px;height:61.3px;border-radius:3.0px;overflow:hidden;background:#fff;box-shadow:0 1px 3px rgba(0,0,0,.13)"><svg width="30.5" height="61.3" viewBox="0 0 30.5 61.3"><use href="#cookie" x="0" y="0" width="30.5" height="31.5"/><rect x="4.3" y="35.7" width="21.9" height="1.7" fill="#111"/><rect x="4.3" y="39.900000000000006" width="15.2" height="1.7" fill="#111"/><rect x="4.3" y="49.8" width="16.5" height="6.899999999999999" rx="2.9" fill="#000"/><rect x="8.425" y="52.35" width="8.25" height="1.8" fill="#fff"/></svg></div>
<div class="a" style="left:1108.8px;top:1092.5px;width:30.5px;height:61.3px;border-radius:3.0px;overflow:hidden;background:#fff;box-shadow:0 1px 3px rgba(0,0,0,.13)"><svg width="30.5" height="61.3" viewBox="0 0 30.5 61.3"><use href="#cookie" x="0" y="0" width="30.5" height="31.5"/><rect x="4.3" y="35.7" width="21.9" height="1.7" fill="#111"/><rect x="4.3" y="39.900000000000006" width="15.2" height="1.7" fill="#111"/><rect x="4.3" y="49.8" width="16.5" height="6.899999999999999" rx="2.9" fill="#000"/><rect x="8.425" y="52.35" width="8.25" height="1.8" fill="#fff"/></svg></div>
<div class="a" style="left:1147.6px;top:1092.5px;width:30.5px;height:61.3px;border-radius:3.0px;overflow:hidden;background:#fff;box-shadow:0 1px 3px rgba(0,0,0,.13)"><svg width="30.5" height="61.3" viewBox="0 0 30.5 61.3"><use href="#cookie" x="0" y="0" width="30.5" height="31.5"/><rect x="4.3" y="35.7" width="21.9" height="1.7" fill="#111"/><rect x="4.3" y="39.900000000000006" width="15.2" height="1.7" fill="#111"/><rect x="4.3" y="49.8" width="16.5" height="6.899999999999999" rx="2.9" fill="#000"/><rect x="8.425" y="52.35" width="8.25" height="1.8" fill="#fff"/></svg></div>
<div class="t" style="left:741px;top:1259.01px;font-size:18.3px;color:#1f2026;-webkit-text-stroke:0.35px #1f2026;letter-spacing:0.28px;">Vertical alignment</div>
<div class="t" style="left:899px;width:20px;text-align:center;top:1259.4px;font-size:13px;color:#8d8d90">?</div>
<div class="a" style="left:741px;top:1291px;width:330px;height:47px;border-radius:10px;background:#eff0f0"></div>
<div class="a" style="left:989.5px;top:1293px;width:79.5px;height:43px;border-radius:8px;background:#fff;box-shadow:0 1px 2px rgba(0,0,0,.14)"></div>
<div class="t" style="left:1099.5px;top:1259.01px;font-size:18.3px;color:#8e8f93;-webkit-text-stroke:0.3px #8e8f93;letter-spacing:0.15px;">Horizontal alignment</div>
<div class="t" style="left:1279px;width:20px;text-align:center;top:1259.4px;font-size:13px;color:#c4c4c6">?</div>
<div class="a" style="left:1100px;top:1291px;width:330px;height:47px;border-radius:10px;background:#f7f8f8"></div>
<div class="a" style="left:1102px;top:1293px;width:107px;height:43px;border-radius:8px;background:#fff;box-shadow:0 1px 2px rgba(0,0,0,.08)"></div>
<div class="t" style="left:741px;top:1368.11px;font-size:18.3px;color:#1f2026;-webkit-text-stroke:0.35px #1f2026;">Spacing between cards</div>
<div class="a" style="left:741px;top:1399.4px;width:330px;height:47.2px;border-radius:10px;background:#eff0f0"></div>
<div class="a" style="left:956px;top:1401.8px;width:113px;height:42.4px;border-radius:8px;background:#fff;box-shadow:0 1px 2px rgba(0,0,0,.14)"></div>
<div class="t" style="left:841px;top:1414.01px;font-size:18.3px;color:#8a8b8f;width:115px;text-align:center;">25px</div>
<div class="t" style="left:956px;top:1414.01px;font-size:18.3px;color:#202228;width:113px;text-align:center;">50px</div>
<div class="a" style="left:741px;top:1475px;width:689px;height:90px;border-radius:10px;background:#f4f4f4;overflow:hidden"><svg width="120" height="90" viewBox="741 1475 120 90"><path d="M741 1475 H780 L808 1491 Q817 1497 813 1506 L777 1567 H741 Z" fill="#ef8a6f"/><path d="M780 1475 L808 1491 Q817 1497 813 1506 L777 1567" fill="none" stroke="#1f2a2e" stroke-width="2.2"/><g transform="translate(787 1504.8) rotate(32)"><rect x="-16" y="-16" width="32" height="32" rx="6" fill="#16181b"/><rect x="-16" y="-16" width="32" height="14" rx="6" fill="#2a2c30" opacity="0.5"/><circle cx="0" cy="10" r="3.3" fill="#c9c3b5"/><circle cx="0" cy="-7" r="1.2" fill="#444"/><circle cx="-8" cy="0" r="1.3" fill="#2a3550"/><circle cx="8" cy="0" r="1.3" fill="#2a3550"/></g></svg></div>
<div class="t" style="left:846px;top:1510.51px;font-size:18.3px;color:#202228;">Set up the display of cards on mobile devices</div>
<div class="a" style="left:1308.5px;top:1496px;width:100.5px;height:47.3px;border-radius:10px;background:#e7e8e8"></div>
<div class="t" style="left:1308.5px;top:1510.51px;font-size:18.3px;color:#202228;width:100.5px;text-align:center;">Settings</div>
<svg class="a" style="left:720px;top:202px" width="734" height="1384" viewBox="720 202 734 1384"><rect x="749.25" y="227.25" width="20" height="20" rx="3.5" fill="none" stroke="#1f2026" stroke-width="2.5"/>
<path d="M749.5 234 H769 M756 234 V247" stroke="#1f2026" stroke-width="2.5"/>
<path d="M885.5 227 C882 232 878.2 236 878.2 240.8 C878.2 245 881.5 248 885.5 248 C889.5 248 892.8 245 892.8 240.8 C892.8 236 889 232 885.5 227 Z" fill="none" stroke="#77787c" stroke-width="2.6" stroke-linejoin="round"/>
<path d="M1417 228.5 L1435 246.5 M1435 228.5 L1417 246.5" stroke="#8e8e8e" stroke-width="1.8"/>
<path d="M763.5 316 V311 Q763.5 308.5 766 308.5 H771 M776 308.5 H781 Q783.5 308.5 783.5 311 V316 M783.5 321 V326 Q783.5 328.5 781 328.5 H776 M771 328.5 H766 Q763.5 328.5 763.5 326 V321" fill="none" stroke="#77787c" stroke-width="3" stroke-linecap="round"/>
<path d="M762 374.6 H775.7 M768.9 374.6 V387.6 M776.3 380.6 H784.6 M780.6 380.6 V387.6" fill="none" stroke="#77787c" stroke-width="2.7"/>
<rect x="763.25" y="434" width="20.5" height="17.5" rx="2" fill="none" stroke="#77787c" stroke-width="2.5"/>
<rect x="766.4" y="445.4" width="13.6" height="2.5" fill="#77787c"/>
<rect x="763.25" y="495.75" width="20.5" height="17.5" rx="2" fill="none" stroke="#77787c" stroke-width="2.5"/>
<rect x="763.25" y="497" width="20.5" height="3.5" fill="#77787c"/>
<rect x="768.5" y="497.6" width="1.8" height="2" fill="#f4f4f4"/><rect x="773.5" y="497.6" width="1.8" height="2" fill="#f4f4f4"/>
<path d="M768 561.8 L763.5 566.3 L768 570.8 M778.8 561.8 L783.3 566.3 L778.8 570.8" fill="none" stroke="#77787c" stroke-width="3" stroke-linecap="round" stroke-linejoin="round"/>
<g fill="#77787c"><rect x="1260.2" y="370.6" width="5.2" height="5" transform="rotate(0 1262.8 380.6)"/><rect x="1260.2" y="370.6" width="5.2" height="5" transform="rotate(45 1262.8 380.6)"/><rect x="1260.2" y="370.6" width="5.2" height="5" transform="rotate(90 1262.8 380.6)"/><rect x="1260.2" y="370.6" width="5.2" height="5" transform="rotate(135 1262.8 380.6)"/><rect x="1260.2" y="370.6" width="5.2" height="5" transform="rotate(180 1262.8 380.6)"/><rect x="1260.2" y="370.6" width="5.2" height="5" transform="rotate(225 1262.8 380.6)"/><rect x="1260.2" y="370.6" width="5.2" height="5" transform="rotate(270 1262.8 380.6)"/><rect x="1260.2" y="370.6" width="5.2" height="5" transform="rotate(315 1262.8 380.6)"/></g><circle cx="1262.8" cy="380.6" r="5.3" fill="none" stroke="#77787c" stroke-width="4.4"/>
<circle cx="1232.6" cy="629.6" r="9.2" fill="none" stroke="#8d8d90" stroke-width="1.4"/>
<rect x="1102" y="675" width="231" height="2.2" fill="#e3e3e3"/>
<rect x="1100.7" y="670.5" width="2.6" height="10.5" rx="1" fill="#d2d2d2"/>
<rect x="1148.7" y="670.5" width="2.6" height="10.5" rx="1" fill="#d2d2d2"/>
<rect x="1195.7" y="670.5" width="2.6" height="10.5" rx="1" fill="#d2d2d2"/>
<rect x="1243.7" y="670.5" width="2.6" height="10.5" rx="1" fill="#d2d2d2"/>
<rect x="1291.3" y="670.5" width="2.6" height="10.5" rx="1" fill="#d2d2d2"/>
<rect x="866.8" y="775" width="11" height="19" rx="1.5" fill="none" stroke="#202228" stroke-width="2.8"/>
<rect x="1194" y="778.8" width="19.8" height="11.4" rx="1.5" fill="none" stroke="#77787c" stroke-width="2.5"/><rect x="728" y="1244.3" width="200" height="43.2" rx="21.6" fill="none" stroke="#5cb35b" stroke-width="3.6"/>
<circle cx="909" cy="1268" r="9.2" fill="none" stroke="#8d8d90" stroke-width="1.4"/>
<rect x="824" y="1303" width="1.2" height="23" fill="#d9dadb"/><rect x="905.6" y="1303" width="1.2" height="23" fill="#d9dadb"/>
<g fill="#77787c"><rect x="775" y="1306.5" width="2.6" height="9" /><rect x="782" y="1306.5" width="2.6" height="16.5"/><rect x="789.2" y="1306.5" width="2.6" height="9"/><rect x="857" y="1311" width="2.6" height="9.8"/><rect x="864.3" y="1307.7" width="2.6" height="16.6"/><rect x="871.2" y="1311" width="2.6" height="9.8"/><rect x="938.3" y="1314" width="2.6" height="9"/><rect x="945.7" y="1306.5" width="2.6" height="16.5"/><rect x="952.7" y="1314" width="2.6" height="9"/></g>
<g fill="#1a1b20"><rect x="1020" y="1306.5" width="3.2" height="16.5"/><rect x="1027.9" y="1306.5" width="3.2" height="16.5"/><rect x="1035.4" y="1306.5" width="3.2" height="16.5"/></g>
<circle cx="1289" cy="1268" r="9.2" fill="none" stroke="#c4c4c6" stroke-width="1.4"/>
<rect x="1319.5" y="1303" width="1.2" height="23" fill="#ececec"/>
<g fill="#7a7b7f"><rect x="1147.5" y="1306" width="8.3" height="2.6"/><rect x="1147.5" y="1313.2" width="16.5" height="2.6"/><rect x="1147.5" y="1320.2" width="8.3" height="2.6"/></g>
<g fill="#b8b9bb"><rect x="1261" y="1306" width="7.8" height="2.6"/><rect x="1256.6" y="1313.2" width="16.4" height="2.6"/><rect x="1261" y="1320.2" width="7.8" height="2.6"/><rect x="1374" y="1306" width="8" height="2.6"/><rect x="1365.7" y="1313.2" width="16.3" height="2.6"/><rect x="1374" y="1320.2" width="8" height="2.6"/></g>
<rect x="840" y="1411.5" width="1.2" height="22.5" fill="#d9dadb"/>
<circle cx="791.4" cy="1422.8" r="9.2" fill="none" stroke="#77787c" stroke-width="1.6"/><path d="M785 1429.2 L797.8 1416.4" stroke="#77787c" stroke-width="1.6"/></svg>
</body></html>
